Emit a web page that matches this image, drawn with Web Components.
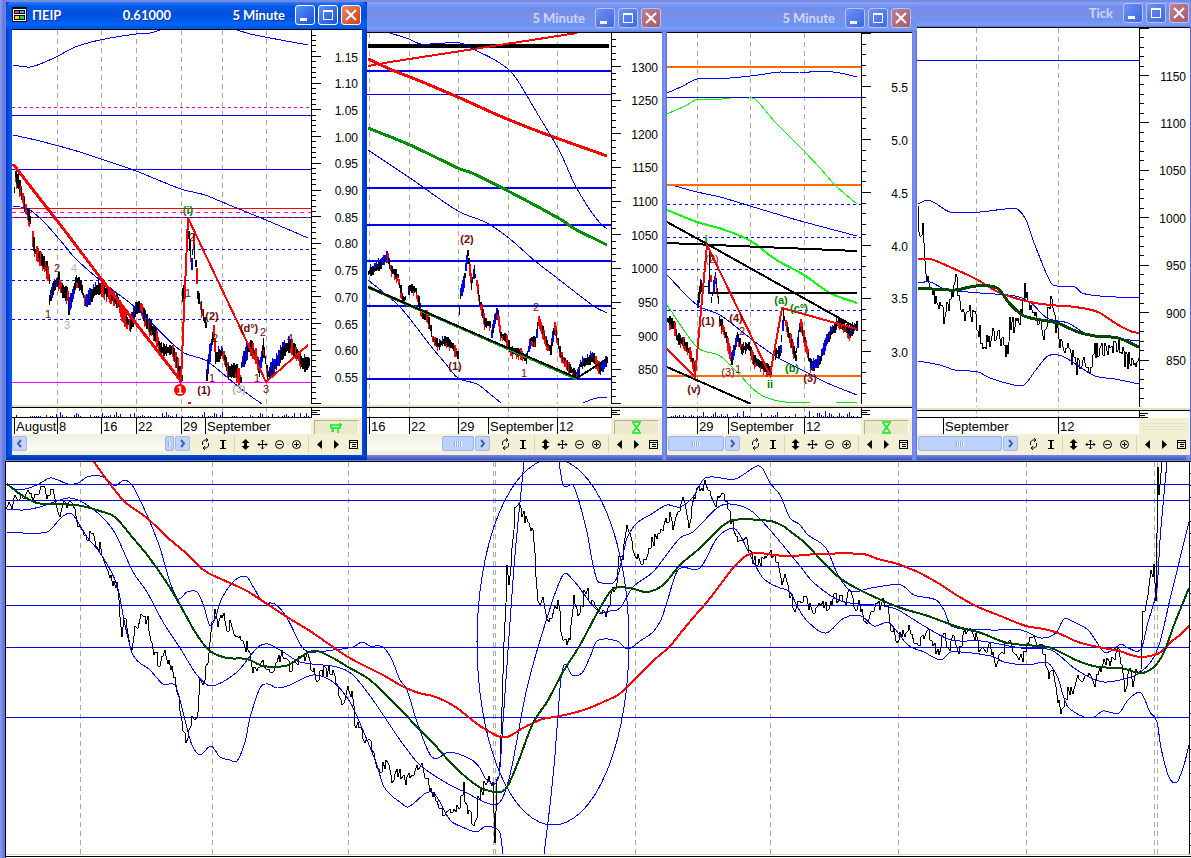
<!DOCTYPE html>
<html lang="en">
<head>
<meta charset="utf-8">
<meta name="viewport" content="width=device-width, initial-scale=1">
<title>ΠΕΙΡ 5 Minute</title>
<style>
    html, body { height: 100%; margin: 0; }
    body {
        font-family: "Liberation Sans", Arial, sans-serif;
        font-size: 12px;
        color: #000;
        background: #7489e4;
    }
</style>
</head>
<body>
<chart-desk>
    <chart-window active heading="ΠΕΙΡ" quote="0.61000" interval="5 Minute" style="--bar: 27px">
        <price-plot chart="peir"></price-plot>
        <volume-strip chart="peir"></volume-strip>
        <date-strip chart="peir" status="flag"></date-strip>
        <chart-tools thumb="9" back></chart-tools>
    </chart-window>
    <chart-window interval="5 Minute" style="--bar: 30px">
        <price-plot chart="index"></price-plot>
        <volume-strip chart="index"></volume-strip>
        <date-strip chart="index" status="glass"></date-strip>
        <chart-tools thumb="32"></chart-tools>
    </chart-window>
    <chart-window interval="5 Minute" style="--bar: 30px">
        <price-plot chart="bank"></price-plot>
        <volume-strip chart="bank"></volume-strip>
        <date-strip chart="bank" status="glass"></date-strip>
        <chart-tools thumb="56"></chart-tools>
    </chart-window>
    <chart-window last interval="Tick" style="--bar: 25px; --volume: 8px">
        <price-plot chart="tick"></price-plot>
        <volume-strip chart="tick"></volume-strip>
        <date-strip chart="tick"></date-strip>
        <chart-tools thumb="84"></chart-tools>
    </chart-window>
    <wide-chart slot="wide" chart="wide"></wide-chart>
</chart-desk>

<script>
/**
 * Chart data. Every chart has a view box (x, y, width, height) and
 * its lines, bars and labels are given in that same space.
 */
const BLUE = '#0000ff';
const NAVY = '#0000f0';
const RED = '#ff0000';
const MAROON = '#700c0c';
const GREEN = '#008000';
const GREY = '#b4b4a8';

const CHARTS = {
    peir: {
        view: [12, 30, 299, 374],
        grid: [57.5, 101.5, 136.5, 181.5, 222.5, 266.5],
        dates: [['August', 14], ['8', 57], ['16', 101], ['22', 136], ['29', 181], ['September', 205]],
        axis: { first: 56.5, step: 26.7, minor: 5, values: ['1.15', '1.10', '1.05', '1.00', '0.95', '0.90', '0.85', '0.80', '0.75', '0.70', '0.65', '0.60', '0.55'] },
        levels: [
            [107.5, '#e000e0', 1, '3 3'], [115.5, NAVY, 1], [169.5, NAVY, 1], [208.5, RED, 1],
            [212.5, '#ff00ff', 1, '4 4'], [217.5, NAVY, 1], [217.5, RED, 1, '3 4'],
            [249.5, BLUE, 1, '3 3'], [280.5, BLUE, 1, '3 3'], [319.5, BLUE, 1, '3 3'], [382.5, '#ff00ff', 1],
        ],
        bars: [
            '14,190 15,175 20,190 25,208 30,220',
            '32,238 34,250 45,265 49,280',
            '49,300 52,290 58,280 61,290 67,295 68,308 72,295 76,280 80,285 85,303 95,290 101,288 110,295 118,302 122,315 130,325 136,308 140,306 145,320 155,335 160,350 172,350 181,378',
            '182,295 184,284',
            '187,225 191,265 193,240 196,275 197,295 203,315 205,325',
            '206,375 208,360 213,330 215,358 222,352 228,372 235,370 240,380',
            '241,365 249,345 255,355 259,370 263,345 267,375 275,365 283,350 290,345 297,355 303,365 308,362',
        ],
        spread: 13,
        lines: [
            [BLUE, 1, '13,65 30,67 45,62 60,55 75,47 100,40 136,34 150,33 160,30'],
            [BLUE, 1, '237,30 250,34 270,38 308,45'],
            [BLUE, 1, '13,135 40,141 80,152 101,159 136,171 181,189 205,195 222,202 266,220 308,238'],
            [BLUE, 1, '13,206 28,209 42,220 60,240 75,258 101,281 136,308 181,351 205,360 222,373 245,392 262,404'],
            [RED, 3, '13,164 72,240 102,280 181,381'],
            [RED, 2, '181,381 188,218 266,382 308,345'],
            [RED, 3, '188,403 191,403'],
        ],
        labels: [
            ['(i)', 188, 210, GREEN, 1], ['2', 192, 237, MAROON], ['2', 57, 268, MAROON], ['4', 74, 268, GREY],
            ['1', 48, 314, MAROON], ['3', 67, 325, GREY], ['1', 188, 293, MAROON], ['(2)', 212, 316, MAROON, 1],
            ['2', 215, 338, MAROON], ['(d°)', 249, 328, MAROON, 1], ['2', 263, 332, MAROON], ['4', 290, 338, MAROON],
            ['1', 212, 378, MAROON], ['1', 257, 378, MAROON], ['3', 266, 389, MAROON], ['(1)', 204, 390, MAROON, 1],
            ['(3)', 239, 389, GREY, 1], ['1', 180, 390, '#ffffff', 1, 'disc'],
        ],
    },
    index: {
        view: [367, 33, 244, 371],
        grid: [369.5, 409.5, 458.5, 508.5, 557.5],
        dates: [['16', 369], ['22', 409], ['29', 458], ['September', 488], ['12', 557]],
        axis: { first: 66.5, step: 33.65, minor: 5, values: ['1300', '1250', '1200', '1150', '1100', '1050', '1000', '950', '900', '850'] },
        levels: [
            [71, NAVY, 2], [94.5, NAVY, 1], [188, NAVY, 2], [225, NAVY, 2], [261, NAVY, 2], [306, NAVY, 2], [379, NAVY, 2],
        ],
        bars: [
            '368,273 377,267 387,257 391,270 397,276 402,300 405,298',
            '408,292 410,288 415,290 419,305 422,315 426,315 430,328 432,338 438,345 445,340 452,346 457,355',
            '459,310 460,295 463,283 467,253 471,285 474,270 479,300 484,322 490,325',
            '491,335 494,320 497,313 500,335 505,338 510,350 520,353 526,360 530,340 535,342 538,320 545,340 550,350 554,325 560,355 570,370 577,375 580,365 585,362 593,358 600,370 607,360',
        ],
        spread: 9,
        lines: [
            ['#000000', 4, '368,46 609,46'],
            [RED, 2, '368,66 390,62 577,33'],
            [RED, 3, '368,59 392,70 420,81 460,98 500,116 540,132 607,156'],
            ['#009000', 3, '368,128 410,145 460,169 472,173 510,192 560,219 575,229 595,239 607,245'],
            [BLUE, 1, '390,33 409,39 421,44 460,43 475,50 495,60 508,69 516,78 540,118 560,152 575,185 590,210 600,223 607,229'],
            [BLUE, 1, '368,150 410,178 458,211 487,223 510,239 535,261 557,278 595,307 607,313'],
            [BLUE, 1, '368,280 400,307 430,345 445,363 458,378 477,384 490,394 501,403'],
            [BLUE, 1, '583,403 590,400 600,397 607,397'],
            ['#10a010', 3, '368,287 577,379'],
            ['#000000', 2, '368,287 577,378 607,359'],
        ],
        labels: [
            ['(2)', 467, 239, MAROON, 1], ['(1)', 455, 366, MAROON, 1], ['1', 524, 373, MAROON], ['2', 536, 307, MAROON],
        ],
    },
    bank: {
        view: [667, 33, 194, 371],
        grid: [697.5, 750.5, 804.5],
        dates: [['29', 697], ['September', 728], ['12', 804]],
        axis: { first: 86.5, step: 53, minor: 5, values: ['5.5', '5.0', '4.5', '4.0', '3.5', '3.0'] },
        levels: [
            [67, '#ff6a00', 2], [97.5, NAVY, 1], [185, '#ff6a00', 2], [204.5, BLUE, 1, '3 3'],
            [237.5, BLUE, 1, '3 3'], [269.5, BLUE, 1, '3 3'], [310.5, BLUE, 1, '3 3'], [376, '#ff6a00', 2],
        ],
        bars: [
            '667,320 673,325 677,338 683,342 689,352 695,372',
            '697,305 699,290 701,286',
            '708,287 709,255 711,300 715,275 718,300',
            '719,320 725,335 731,360 737,335 741,350 748,346 753,360 760,365 768,370 771,370',
            '775,354 780,350 783,315 790,340 795,358 800,322 805,345 811,368 820,360 826,340 834,328 838,322 845,327 850,333 857,325',
        ],
        spread: 10,
        lines: [
            [BLUE, 1, '667,93 683,86 697,79 730,78 750,76 765,74 780,72 800,73 820,71 840,73 857,77'],
            ['#00ff00', 1, '667,114 685,106 697,99 715,100 730,98'],
            ['#00ff00', 1, '748,98 755,99 775,122 800,147 820,168 835,185 857,204'],
            ['#00ff00', 2, '667,210 697,222 722,229 745,238 757,245 768,254 780,262 804,275 830,293 857,303'],
            [BLUE, 1, '675,186 697,192 720,197 750,206 780,215 804,222 857,236'],
            ['#000000', 2, '667,222 707,244 857,328'],
            ['#000000', 2, '667,243 857,251'],
            ['#000000', 2, '708,293 857,293'],
            ['#000000', 2, '667,367 751,404'],
            ['#000000', 1, '701,286 709,286 709,250'],
            [BLUE, 1, '667,275 697,305 720,315 750,338 775,356 804,371 825,382 857,395'],
            ['#00e800', 1, '667,305 697,347 720,356 740,375 752,388 765,397 785,402 810,403'],
            ['#00e800', 1, '836,403 857,402'],
            [RED, 2, '667,349 695,377 707,245 770,375 782,308 857,329'],
        ],
        labels: [
            ['i', 706, 239, GREEN, 1], ['(2)', 712, 259, MAROON], ['(1)', 708, 321, MAROON, 1], ['(4)', 736, 318, MAROON, 1],
            ['2', 742, 331, MAROON], ['(3)', 728, 372, MAROON], ['1', 738, 369, MAROON], ['(v)', 694, 389, MAROON, 1],
            ['ii', 770, 384, GREEN, 1], ['(a)', 781, 300, GREEN, 1], ['(c°)', 799, 308, GREEN, 1], ['(b)', 792, 368, GREEN, 1],
            ['(3)', 810, 378, MAROON, 1],
        ],
    },
    tick: {
        view: [917, 28, 222, 379],
        grid: [976.5, 1058.5],
        dates: [['September', 943], ['12', 1058]],
        axis: { first: 75.5, step: 47.45, minor: 5, values: ['1150', '1100', '1050', '1000', '950', '900', '850'] },
        levels: [[60.5, BLUE, 1]],
        noise: 9,
        step: 1,
        price: '918,215 920,240 923,228 925,255 927,278 932,295 938,305 945,318 950,300 957,278 961,318 970,313 976,320 983,342 990,340 997,332 1003,345 1008,352 1010,325 1019,325 1025,288 1030,305 1036,315 1045,334 1048,315 1052,300 1056,325 1060,340 1068,352 1073,358 1077,368 1085,358 1090,366 1095,350 1103,348 1110,353 1116,341 1120,348 1125,360 1135,362 1139,350',
        lines: [
            [BLUE, 1, '918,204 927,200 935,203 950,212 980,212 1005,209 1017,209 1026,220 1033,240 1040,258 1047,275 1053,285 1075,287 1082,293 1100,296 1139,298'],
            [BLUE, 1, '918,283 930,282 945,289 980,293 1015,296 1030,302 1047,318 1068,323 1085,333 1105,337 1139,341'],
            [BLUE, 1, '918,361 940,365 955,370 978,372 990,378 1010,384 1024,385 1035,371 1048,356 1062,356 1080,367 1095,376 1115,379 1139,384'],
            [RED, 2, '918,259 930,259 950,267 976,279 1000,293 1030,302 1050,305 1075,307 1098,312 1115,323 1130,331 1139,333'],
            ['#004800', 3, '918,288 955,290 976,286 997,288 1010,304 1024,316 1057,323 1078,332 1095,336 1118,338 1139,347'],
        ],
        labels: [],
    },
    wide: {
        view: [6, 462, 1183, 392],
        grid: [80.5, 212.5, 348.5, 493.5, 495.5, 635.5, 770.5, 898.5, 1026.5, 1154.5, 1157.5],
        levels: [484.5, 500.5, 566.5, 605.5, 647.5, 717.5].map(y => [y, NAVY, 1]),
        noise: 6,
        step: 1.5,
        price: '6,515 8,502 12,508 15,494 23,499 28,494 33,499 42,489 50,497 54,489 56,505 59,516 63,507 67,502 73,510 78,523 86,540 90,535 100,547 108,567 113,585 117,582 122,635 124,619 132,647 135,630 143,617 148,620 152,648 160,664 165,655 172,667 177,688 182,720 186,742 192,718 198,715 200,682 203,681 208,662 212,625 215,614 218,626 222,613 227,629 230,622 240,642 247,647 254,673 258,665 263,662 273,669 283,652 290,667 308,655 317,681 323,672 333,672 342,700 348,690 352,695 355,721 362,728 366,743 369,734 377,769 386,765 394,780 398,772 407,782 412,772 420,763 425,777 437,803 445,817 453,807 460,808 464,788 468,814 475,823 478,802 486,780 493,782 495,843 497,785 500,762 502,708 504,642 507,563 509,585 515,511 519,508 525,518 532,533 533,530 538,600 544,602 547,617 552,616 558,604 563,637 570,640 574,594 578,617 586,590 597,612 608,612 613,592 617,588 619,553 623,555 627,524 635,552 646,564 652,542 658,537 663,527 670,514 673,531 678,509 683,502 689,525 697,487 708,485 713,506 722,492 730,515 737,537 747,544 750,555 758,566 765,552 775,554 782,585 785,574 790,594 795,610 804,599 816,614 821,602 829,606 834,597 846,601 851,592 854,611 859,605 868,627 870,610 886,602 891,625 897,640 909,629 918,650 927,628 933,647 939,650 944,634 948,648 954,637 959,650 963,636 969,628 976,638 981,654 989,644 996,664 1008,643 1013,652 1021,659 1032,638 1038,648 1040,641 1049,677 1053,666 1058,702 1062,712 1068,691 1074,693 1078,676 1082,680 1089,671 1094,687 1101,668 1104,656 1109,667 1119,649 1125,687 1131,669 1133,687 1136,669 1141,670 1143,607 1146,609 1151,576 1154,569 1156,601 1158,462 1159,490 1162,462',
        ellipse: [553, 642, 76, 183],
        lines: [
            [BLUE, 1, '7,484 15,489 25,489 37,485 50,478 58,480 68,484 78,483 87,477 100,476 108,480 115,486 124,480 132,485 140,500 150,522 160,548 170,582 178,599 187,592 197,592 203,604 211,626 222,598 232,583 240,577 247,577 255,590 263,602 275,604 287,618 302,647 310,652 333,650 353,647 362,642 370,646 383,647 392,660 400,680 407,690 417,722 432,757 450,752 472,760 480,768 487,780 499,776 503,722 510,622 515,555 522,482 524,462'],
            [BLUE, 1, '559,462 563,485 573,485 578,498 587,532 592,560 597,580 602,583 613,583 618,575 623,555 627,538 637,523 650,515 667,505 680,507 693,497 705,478 735,479 757,466 763,469 770,483 780,495 790,518 799,524 808,535 826,548 838,575 851,591 871,588 901,585 914,595 936,600 944,610 951,626 991,630 1021,630 1041,638 1056,633 1064,619 1074,622 1088,630 1096,641 1104,652 1113,650 1121,644 1128,648 1141,649 1148,622 1157,588 1160,540 1163,505 1167,462'],
            [BLUE, 1, '7,509 23,510 40,507 68,498 82,502 100,515 115,533 133,572 147,592 163,622 180,648 197,675 211,686 237,672 257,648 268,644 283,652 300,662 337,667 353,675 373,700 400,740 420,765 450,785 467,793 487,803 500,802 510,775 527,688 547,618 563,575 573,580 590,602 600,612 610,611 620,608 633,587 653,572 680,538 693,532 717,508 730,504 750,510 770,530 800,566 814,583 841,601 884,606 898,610 924,626 951,640 981,641 1021,648 1051,650 1074,668 1091,678 1104,682 1120,680 1141,672 1158,648 1171,595 1189,522'],
            [BLUE, 1, '7,532 47,532 62,517 72,514 87,537 100,553 117,585 125,625 133,655 150,670 163,684 175,685 180,700 187,728 192,745 200,755 211,746 220,757 230,760 237,761 245,742 250,718 260,688 268,684 277,688 290,685 313,675 333,682 350,702 362,728 377,765 383,785 392,796 400,802 408,807 432,792 450,820 460,826 477,832 484,827 492,827 500,833 503,854'],
            [BLUE, 1, '544,854 550,805 555,755 560,688 562,672 565,664 572,675 582,673 590,657 597,641 617,641 628,649 640,641 653,632 661,620 667,602 678,570 700,568 717,538 733,528 740,535 750,555 763,578 780,588 790,592 798,608 808,622 826,633 844,618 861,616 874,626 889,623 908,645 924,652 941,660 951,652 991,656 1004,662 1028,665 1048,663 1058,678 1063,695 1068,707 1084,717 1094,717 1103,711 1119,713 1128,700 1141,693 1150,712 1157,722 1161,748 1169,777 1177,782 1184,765 1189,745'],
            [RED, 2, '94,462 110,484 125,502 147,518 167,537 187,554 200,567 208,573 212,575 230,583 247,591 267,604 287,617 310,631 333,647 348,657 367,667 383,675 400,685 413,691 423,694 433,696 447,702 457,708 467,716 480,726 490,732 500,737 507,737 515,733 523,728 533,723 543,719 560,716 577,712 592,707 603,702 618,695 633,681 653,661 670,646 683,630 693,618 707,602 720,585 733,568 743,558 750,554 760,553 773,555 791,556 818,554 863,554 878,559 898,564 908,568 918,572 938,583 958,596 978,607 998,615 1026,626 1044,629 1058,633 1078,642 1098,647 1119,651 1131,655 1141,657 1154,655 1161,652 1171,642 1181,634 1189,626'],
            ['#004800', 2, '7,484 20,494 37,503 60,504 82,506 103,512 115,517 133,538 148,556 167,583 180,605 197,635 210,651 227,658 247,659 263,666 285,666 297,660 307,653 317,651 333,658 348,667 370,680 400,709 417,727 433,743 450,762 467,778 483,789 500,792 507,787 517,765 533,723 547,702 563,672 580,645 600,608 613,589 630,588 647,592 663,585 680,565 700,548 720,528 733,520 770,521 783,526 791,532 804,542 824,563 841,579 864,592 898,607 928,616 958,627 981,633 1004,642 1024,645 1048,647 1064,654 1078,661 1098,667 1121,668 1141,673 1154,667 1164,652 1174,625 1189,588'],
        ],
        labels: [],
    },
};

// --- Drawing helpers ---

/** Small seeded generator, so the bars are the same on every load. */
const seeded = (seed) => () => {
    seed = (seed * 16807) % 2147483647;
    return seed / 2147483647;
};

const parsePoints = (text) => text.split(' ').map(pair => pair.split(',').map(Number));

/** Walk a coarse track and return points every `step` pixels. */
const walk = (points, step) => {
    const out = [];
    for (let i = 1; i < points.length; i++) {
        const [x1, y1] = points[i - 1];
        const [x2, y2] = points[i];
        const count = Math.max(1, Math.round((x2 - x1) / step));
        for (let n = 0; n < count; n++) {
            out.push([x1 + (x2 - x1) * n / count, y1 + (y2 - y1) * n / count, y2 - y1]);
        }
    }
    out.push([...points[points.length - 1], 0]);
    return out;
};

const line = (x1, y1, x2, y2, color, width = 1, dash = '') =>
    `<line x1="${x1}" y1="${y1}" x2="${x2}" y2="${y2}" stroke="${color}" stroke-width="${width}"${dash ? ` stroke-dasharray="${dash}"` : ''}/>`;

const polyline = (color, width, points) =>
    `<polyline points="${points}" stroke="${color}" stroke-width="${width}"/>`;

/** Averages get a smooth curve through their points, trend lines stay straight. */
const drawLine = (color, width, text) => {
    const points = parsePoints(text);
    if (points.length < 7) return polyline(color, width, text);
    const at = i => points[Math.min(points.length - 1, Math.max(0, i))];
    let d = `M${points[0]}`;
    for (let i = 1; i < points.length; i++) {
        const [a, b, c, e] = [at(i - 2), at(i - 1), at(i), at(i + 1)];
        const reach = (c[0] - b[0]) / 3;
        const slopeB = (c[1] - a[1]) / Math.max(1, c[0] - a[0]);
        const slopeC = (e[1] - b[1]) / Math.max(1, e[0] - b[0]);
        d += `C${b[0] + reach},${b[1] + slopeB * reach} ${c[0] - reach},${c[1] - slopeC * reach} ${c}`;
    }
    return `<path d="${d}" stroke="${color}" stroke-width="${width}"/>`;
};

const drawBars = (tracks, spread) => {
    const random = seeded(421);
    return tracks.map(track => walk(parsePoints(track), 1).map(([x, y, slope]) => {
        const half = spread * (0.2 + random() * 0.4);
        const px = Math.round(x) + 0.5;
        const top = Math.round(y - half);
        const end = Math.round(y + half);
        if (slope > 6 && random() > 0.6) return line(px, top, px, end + 2, RED, 2);
        if (slope < -6 && random() > 0.6) return line(px, top - 2, px, end, BLUE, 2);
        let svg = line(px, top, px, end, '#000000', random() > 0.5 ? 2 : 1);
        if (slope < 0 && random() > 0.7) svg += line(px, top - 3, px, top + 2, BLUE, 1);
        if (slope > 0 && random() > 0.6) svg += line(px, end - 2, px, end + 3, RED, 1);
        return svg;
    }).join('')).join('');
};

const drawPrice = (track, noise, step) => {
    const random = seeded(97);
    const points = walk(parsePoints(track), step).map(([x, y, slope]) => {
        const swing = Math.abs(slope) > 40 ? 0 : (random() - 0.5) * 2 * noise;
        return `${Math.round(x)},${Math.round(y + swing)}`;
    });
    return polyline('#000000', 1, points.join(' '));
};

const drawChart = (chart) => {
    const [left, top, width, height] = chart.view;
    const percentX = x => `${(x - left) / width * 100}%`;
    const percentY = y => `${(y - top) / height * 100}%`;
    let shapes = chart.grid.map(x => line(x, top, x, top + height, '#aaaa9e', 1, '5 4')).join('');
    shapes += chart.levels.map(([y, color, weight, dash]) => line(left, y, left + width, y, color, weight, dash)).join('');
    if (chart.bars) shapes += drawBars(chart.bars, chart.spread);
    if (chart.price) shapes += drawPrice(chart.price, chart.noise, chart.step);
    if (chart.ellipse) {
        const [cx, cy, rx, ry] = chart.ellipse;
        shapes += `<ellipse cx="${cx}" cy="${cy}" rx="${rx}" ry="${ry}" stroke="${BLUE}"/>`;
    }
    shapes += chart.lines.map(entry => drawLine(...entry)).join('');

    const labels = chart.labels.map(([text, x, y, color, bold, disc]) => {
        const at = `x="${percentX(x)}" y="${percentY(y)}"`;
        const back = disc ? `<circle cx="${percentX(x)}" cy="${percentY(y)}" r="6" fill="${RED}"/>` : '';
        return `${back}<text ${at} dy="4" fill="${color}"${bold ? ' font-weight="700"' : ''}>${text}</text>`;
    }).join('');

    return `
        <svg class="plot" role="img" aria-label="Price chart">
            <svg width="100%" height="100%" viewBox="${chart.view.join(' ')}" preserveAspectRatio="none"
                 fill="none" shape-rendering="crispEdges">${shapes}</svg>
            ${labels}
        </svg>`;
};

/** Base class: clones a style sheet and markup into an open shadow root. */
class BaseElement extends HTMLElement {
    connectedCallback() {
        if (this.shadowRoot) return;
        const template = document.createElement('template');
        template.innerHTML = this.render();
        this.attachShadow({ mode: 'open' }).appendChild(template.content.cloneNode(true));
    }

    get chart() { return CHARTS[this.getAttribute('chart')]; }
}

// --- <chart-desk> : a row of windows above one wide chart ---

class ChartDesk extends BaseElement {
    render() {
        return `
            <style>
                :host {
                    display: grid;
                    grid-template-rows: minmax(0, 460fr) minmax(0, 398fr);
                    height: 100vh;
                    min-height: 480px;
                    overflow: hidden;
                    background: linear-gradient(90deg, #8c9cec, #5f74dc 4px, #7489e4 6px);
                }
                .row {
                    display: grid;
                    grid-template-columns: 361fr 300fr 250fr 274fr;
                    grid-template-rows: minmax(0, 1fr);
                    padding: 2px 0 0 6px;
                    min-height: 0;
                }
            </style>
            <div class="row"><slot></slot></div>
            <slot name="wide"></slot>
        `;
    }
}

// --- <chart-window> : frame, title bar and window buttons ---

class ChartWindow extends BaseElement {
    render() {
        const text = name => this.getAttribute(name) || '';
        const icon = `
            <svg class="app" width="15" height="15" viewBox="0 0 15 15" shape-rendering="crispEdges" aria-hidden="true">
                <path fill="#000" d="M0 0h15v15H0z"/><path fill="#fff" d="M1 2h13v12H1z"/>
                <path fill="#000" d="M2 3h11v4H2zM2 8h11v5H2z"/>
                <path fill="#f0288c" d="M3 4h4v2H3z"/><path fill="#28b4f0" d="M8 4h4v2H8z"/>
                <path fill="#e8d820" d="M3 9h4v3H3z"/><path fill="#30d030" d="M8 9h4v3H8z"/>
            </svg>`;
        return `
            <style>
                :host {
                    --face: linear-gradient(#8aa4f2, #6f8df0 20%, #7b8fe2 45%, #6c93f4 75%, #7a9ef6 90%, #6078d8);
                    display: flex;
                    flex-direction: column;
                    min-width: 0;
                    min-height: 0;
                    box-sizing: border-box;
                    padding: 0 5px 5px 0;
                    background: linear-gradient(90deg, #6a80e8, #7d96f8 3px, #5464c8) right / 5px 100% no-repeat, linear-gradient(#7088f4, #4450b0) bottom / 100% 5px no-repeat, #6f86ec;
                }
                :host([active]) {
                    --face: linear-gradient(#2a7cf8, #0058e8 16%, #0050dc 50%, #0062fa 80%, #0056e6);
                    padding-left: 6px;
                    background: linear-gradient(#0050e8, #0028a8) bottom / 100% 5px no-repeat, linear-gradient(90deg, #0030c0, #0058f0 4px, #0048dc calc(100% - 4px), #0030b8);
                }
                :host([last]) { padding-right: 1px; }
                header {
                    display: flex;
                    align-items: flex-end;
                    gap: 3px;
                    height: var(--bar);
                    box-sizing: border-box;
                    padding-bottom: 4px;
                    margin-right: -5px;
                    padding-right: 6px;
                    font: 700 13px/20px Lato, "Noto Sans", sans-serif;
                    color: #ccd6fb;
                    background: var(--face);
                    white-space: nowrap;
                }
                :host([active]) header { color: #fff; margin-left: -6px; padding-left: 6px; border-radius: 6px 6px 0 0; text-shadow: 1px 1px #0838a0; }
                :host([last]) header { margin-right: -1px; padding-right: 2px; }
                .app { margin: 0 2px 3px 0; }
                .quote { margin: 0 auto; }
                .interval { margin-right: 7px; }
                button {
                    width: 20px;
                    height: 20px;
                    padding: 0;
                    border: 1px solid #b4c4fa;
                    border-radius: 3px;
                    background: linear-gradient(135deg, #7090f4, #3c68e0);
                    line-height: 0;
                }
                .close { background: linear-gradient(135deg, #c08090, #a85868); }
                :host([active]) button { border-color: #fff; background: linear-gradient(135deg, #5c90f8, #1c50d8); }
                :host([active]) .close { background: linear-gradient(135deg, #f08868, #d03c14); }
                main {
                    flex: 1;
                    display: flex;
                    flex-direction: column;
                    min-height: 0;
                    background: #fff;
                    border-top: 1px solid #000;
                }
            </style>
            <header>
                ${this.hasAttribute('active') ? icon : ''}
                <span>${text('heading')}</span>
                <span class="quote">${text('quote')}</span>
                <span class="interval">${text('interval')}</span>
                <button type="button" aria-label="Minimize"><svg width="18" height="18"><path d="M4 12h7v3H4z" fill="#fff"/></svg></button>
                <button type="button" aria-label="Maximize"><svg width="18" height="18" fill="none" stroke="#fff" shape-rendering="crispEdges"><path d="M4.500 5.500h9v8h-9z"/><path d="M4 5h10" stroke-width="2"/></svg></button>
                <button type="button" class="close" aria-label="Close"><svg width="18" height="18" stroke="#fff" stroke-width="2"><path d="M4 4l10 10M14 4L4 14"/></svg></button>
            </header>
            <main><slot></slot></main>
        `;
    }
}

// --- <price-plot> : chart area with its price axis ---

class PricePlot extends BaseElement {
    render() {
        const { axis, view } = this.chart;
        const percent = y => `${(y - view[1]) / view[3] * 100}%`;
        const minor = axis.step / axis.minor;
        let ticks = '';
        for (let n = -12; n < axis.values.length * axis.minor + 12; n++) {
            const y = axis.first + n * minor;
            if (y < view[1] || y > view[1] + view[3]) continue;
            const long = n % axis.minor === 0;
            ticks += `<line x1="0" x2="${long ? 9 : 4}" y1="${percent(y)}" y2="${percent(y)}"/>`;
        }
        const labels = axis.values.map((value, i) =>
            `<text x="46" y="${percent(axis.first + i * axis.step)}" dy="5">${value}</text>`).join('');
        return `
            <style>
                :host {
                    flex: 1;
                    display: grid;
                    grid-template-columns: minmax(0, 1fr) 51px;
                    grid-template-rows: minmax(0, 1fr);
                    min-height: 0;
                    border-bottom: 2px solid #e4e0c4;
                    padding-bottom: 1px;
                }
                svg { display: block; width: 100%; height: 100%; }
                .plot { overflow: hidden; font-size: 11px; text-anchor: middle; }
                .axis { box-sizing: border-box; border-left: 1px solid #000; font-size: 12px; text-anchor: end; }
            </style>
            ${drawChart(this.chart)}
            <svg class="axis">
                <g stroke="#000" shape-rendering="crispEdges">${ticks}</g>
                ${labels}
            </svg>
        `;
    }
}

// --- <volume-strip> ---

class VolumeStrip extends BaseElement {
    render() {
        const [left, , width] = this.chart.view;
        const random = seeded(left * 7 + 3);
        const quiet = this.getAttribute('chart') === 'index' || this.getAttribute('chart') === 'tick';
        let bars = '';
        for (let x = 2; x < width - 2; x += 2) {
            const height = Math.floor(random() ** 5 * 6) + (random() > 0.6 ? 1 : 0);
            if (height && !quiet) bars += line(left + x + 0.5, 9 - height, left + x + 0.5, 9, BLUE);
        }
        const grid = this.chart.grid.map(x => line(x, 0, x, 9, '#aaaa9e', 1, '4 3')).join('');
        return `
            <style>
                :host {
                    display: grid;
                    grid-template-columns: minmax(0, 1fr) 51px;
                    height: var(--volume, 11px);
                    box-sizing: border-box;
                    border-top: 1px solid #000;
                }
                svg { display: block; width: 100%; height: 100%; box-sizing: border-box; }
                .bars { border-bottom: 1px solid #000; }
                .marks { border-left: 1px solid #000; }
            </style>
            <svg class="bars" viewBox="${left} 0 ${width} 9" preserveAspectRatio="none" shape-rendering="crispEdges">${grid}${bars}</svg>
            <svg class="marks" shape-rendering="crispEdges"><path d="M0 2.500h8M0 4.500h5M0 6.500h8" stroke="#000"/></svg>
        `;
    }
}

// --- <date-strip> : dates under the chart, status box at the right ---

class DateStrip extends BaseElement {
    render() {
        const { view, dates } = this.chart;
        const stops = [view[0], ...dates.map(([, x]) => x), view[0] + view[2]];
        const columns = stops.slice(1).map((x, i) => `minmax(0, ${x - stops[i]}fr)`).join(' ');
        const icons = {
            flag: '<path d="M2 4h12M3 4v3h7v5M5 9V7M12 2v5h-2M3 10h3"/>',
            glass: '<path d="M4 1h9M4 12h9M5 2l7 9M12 2l-7 9"/>',
        };
        const icon = icons[this.getAttribute('status')];
        return `
            <style>
                :host {
                    display: grid;
                    grid-template-columns: minmax(0, 1fr) 51px;
                    height: 16px;
                    background: #f4f0d4;
                }
                .dates {
                    display: grid;
                    grid-template-columns: ${columns};
                    background: #fff;
                    font-size: 13px;
                    line-height: 17px;
                    white-space: nowrap;
                }
                .dates span { border-left: 1px solid #000; padding-left: 1px; }
                .status {
                    margin: 2px 3px;
                    border: 1px solid;
                    border-color: #b4b098 #fff #fff #b4b098;
                    background: #ece9cc;
                    display: flex;
                    justify-content: center;
                    align-items: center;
                }
                .empty { border-color: transparent; background: repeating-linear-gradient(#f4f0d4 0 2px, #e6e4cc 2px 3px); }
            </style>
            <div class="dates"><i></i>${dates.map(([text]) => `<span>${text}</span>`).join('')}</div>
            <div class="status${icon ? '' : ' empty'}">
                ${icon ? `<svg width="17" height="13" fill="none" stroke="#00f020" stroke-width="1.500">${icon}</svg>` : ''}
            </div>
        `;
    }
}

// --- <chart-tools> : scroll bar and tool buttons ---

const TOOLS = [
    ['Reload', '<path d="M5.500 9V6l2-2H11M9 2l2 2-2 2M11.500 7v3l-2 2H6M8 10l-2 2 2 2" fill="none" stroke="#000"/>'],
    ['Cursor', '<path d="M6 4.500h6M6 12.500h6M8.500 5v7" stroke="#000" fill="none"/><path d="M8 5h2v7H8z"/>'],
    null,
    ['Fit height', '<path d="M8.500 3l4 4h-2.500v3h2.500l-4 4-4-4H7V7H4.500z"/>'],
    ['Move', '<path d="M8.500 4v9M4 8.500h9M7 5.500L8.500 4 10 5.500M7 11.500L8.500 13l1.500-1.500M5.500 7L4 8.500 5.500 10M11.500 7L13 8.500 11.500 10" fill="none" stroke="#000"/>'],
    ['Zoom out', '<circle cx="8.500" cy="8.500" r="4" fill="none" stroke="#000"/><path d="M6 8.500h5" stroke="#000"/>'],
    ['Zoom in', '<circle cx="8.500" cy="8.500" r="4" fill="none" stroke="#000"/><path d="M6 8.500h5M8.500 6v5" stroke="#000"/>'],
    null,
    ['Previous', '<path d="M11 4v9L6 8.500z"/>'],
    ['Next', '<path d="M6 4v9l5-4.500z"/>'],
    ['List', '<path d="M4.500 4.500h8v8h-8zM5 6.500h7M7 8.500h4M7 10.500h4" fill="none" stroke="#000" shape-rendering="crispEdges"/>'],
];

class ChartTools extends BaseElement {
    render() {
        const arrow = (label, path) => `
            <button type="button" class="arrow" aria-label="${label}">
                <svg width="9" height="9" fill="none" stroke="#4860a0" stroke-width="2"><path d="${path}"/></svg>
            </button>`;
        const tools = TOOLS.map(tool => tool
            ? `<button type="button" class="tool" aria-label="${tool[0]}"><svg width="17" height="17">${tool[1]}</svg></button>`
            : '<i></i>').join('');
        return `
            <style>
                :host {
                    --thumb: ${this.getAttribute('thumb')}px;
                    display: flex;
                    height: 21px;
                    box-sizing: border-box;
                    padding: 2px 0 3px;
                    background: #f3f0d6;
                }
                button { padding: 0; border: 0; background: none; line-height: 0; }
                .arrow {
                    width: 15px;
                    height: 15px;
                    border: 1px solid #a4bcec;
                    border-radius: 2px;
                    background: #c2d4fa;
                    flex: none;
                }
                input {
                    flex: 1;
                    min-width: 0;
                    width: 0;
                    height: 15px;
                    margin: 0 1px 0 0;
                    appearance: none;
                    background: linear-gradient(#f0eee8, #fdfdf6);
                }
                input::-webkit-slider-thumb {
                    appearance: none;
                    width: var(--thumb);
                    height: 15px;
                    border: 1px solid #98b4ee;
                    border-radius: 2px;
                    background: repeating-linear-gradient(90deg, #8caae8 0 1px, #eef4fe 1px 2px) center / min(8px, 30%) 6px no-repeat, #bcd2fc;
                }
                .tools { display: flex; margin-left: 7px; }
                .tool { width: 17px; height: 17px; }
                i { width: 3px; margin-right: 2px; border-right: 1px solid #d8d4bc; }
            </style>
            ${this.hasAttribute('back') ? arrow('Scroll back', 'M6 1L3 4.500 6 8') : ''}
            <input type="range" min="0" max="100" value="100" aria-label="Scroll position">
            ${arrow('Scroll forward', 'M3 1l3 3.500L3 8')}
            <div class="tools">${tools}</div>
        `;
    }
}

// --- <wide-chart> : the maximized chart behind the windows ---

class WideChart extends BaseElement {
    render() {
        return `
            <style>
                :host {
                    display: flex;
                    flex-direction: column;
                    min-height: 0;
                    margin: 1px 0 0 5px;
                    border: solid #000;
                    border-width: 1px 0 0 1px;
                    background: #fff;
                }
                .area {
                    flex: 1;
                    min-height: 0;
                    display: grid;
                    grid-template-columns: minmax(0, 1fr) 2px;
                    grid-template-rows: minmax(0, 1fr);
                    border-bottom: 1px solid #dcd8b8;
                }
                .plot { display: block; width: 100%; height: 100%; overflow: hidden; }
                .axis { border-left: 1px solid #000; background: repeating-linear-gradient(#fff 0 11px, #000 11px 12px); }
                footer { height: 1px; margin-top: 1px; border-top: 1px solid #000; }
            </style>
            <div class="area">${drawChart(this.chart)}<div class="axis"></div></div>
            <footer></footer>
        `;
    }
}

customElements.define('chart-desk', ChartDesk);
customElements.define('chart-window', ChartWindow);
customElements.define('price-plot', PricePlot);
customElements.define('volume-strip', VolumeStrip);
customElements.define('date-strip', DateStrip);
customElements.define('chart-tools', ChartTools);
customElements.define('wide-chart', WideChart);
</script>
</body>
</html>
